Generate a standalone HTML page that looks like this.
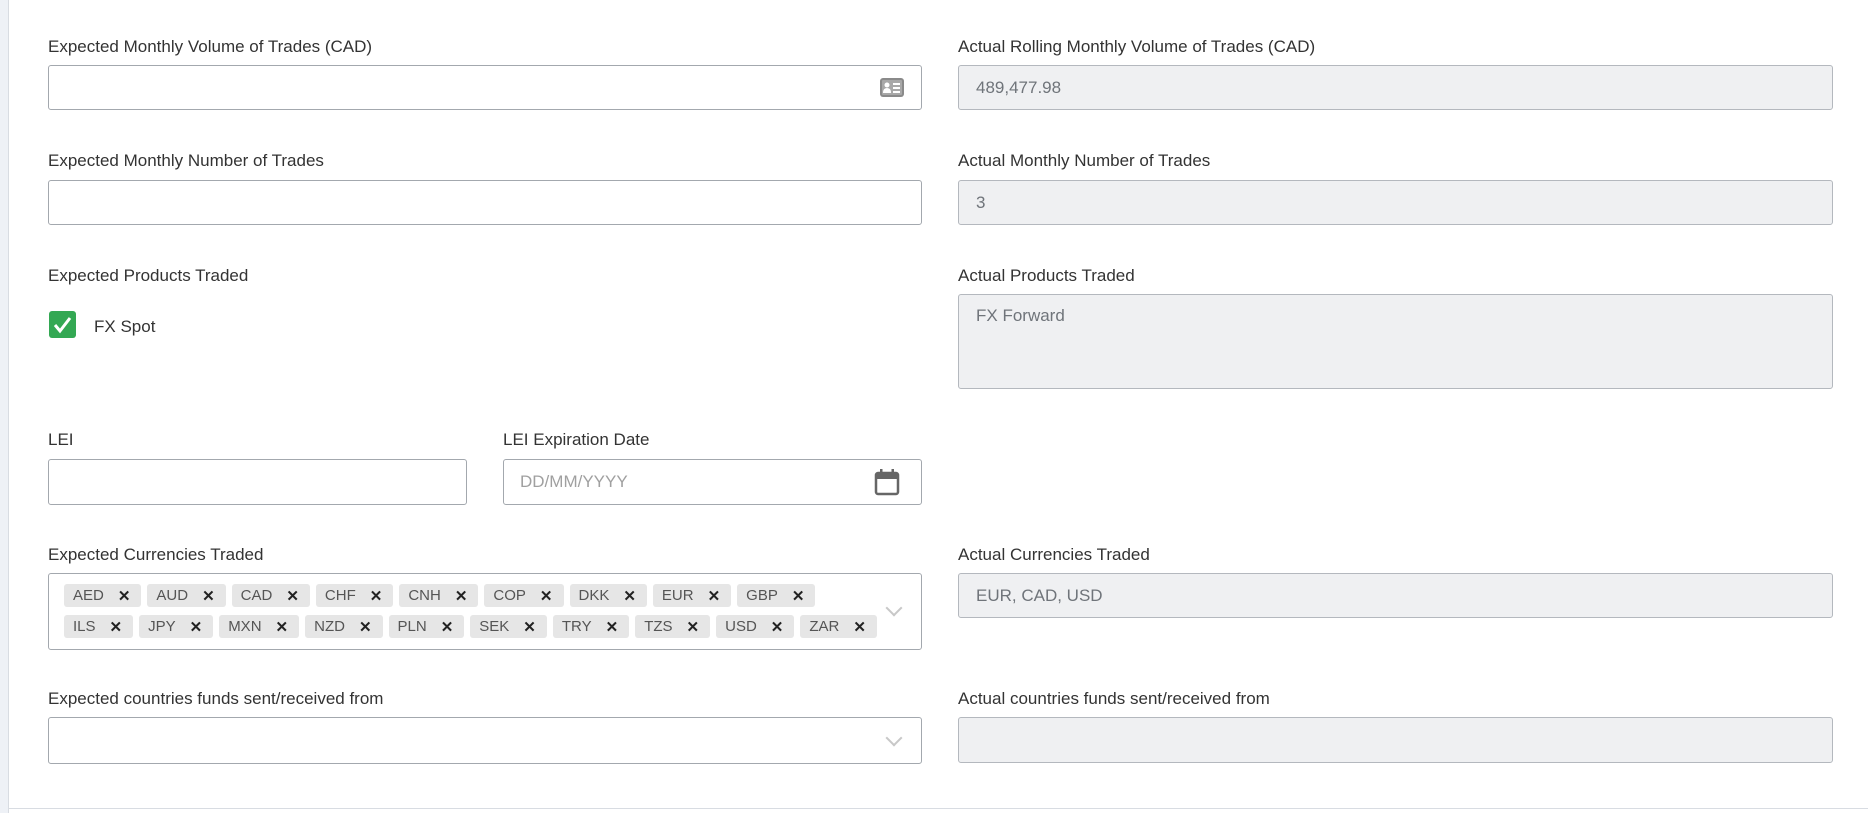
<!DOCTYPE html>
<html><head><meta charset="utf-8"><style>
*{box-sizing:border-box;margin:0;padding:0}
body{width:1868px;height:813px;background:#fff;font-family:"Liberation Sans",sans-serif;color:#333;position:relative;overflow:hidden}
.strip{position:absolute;left:0;top:0;width:9px;height:813px;background:#eef1f6;border-right:1px solid #d8dce2}
.bottom{position:absolute;left:9px;top:808px;width:1859px;height:1px;background:#d8dce2}
.lbl{position:absolute;font-size:17px;color:#333;line-height:20px;margin-top:2px}
.box{position:absolute;border:1px solid #a3a8ae;border-radius:3px;background:#fff}
.dis{background:#eff0f2;border-color:#b4b8be;color:#6f747a;font-size:17px;padding-left:17px}
.chip{display:inline-flex;align-items:center;height:23px;background:#e6e6e6;border-radius:3px;font-size:15px;color:#555;padding:0 11px 0 9px;margin-right:6px}
.chip b{font-size:15px;color:#222;margin-left:14px;font-weight:bold}
.row{position:absolute;left:15px;display:flex}
.chev{position:absolute;width:12px;height:12px;border-right:2px solid #c8c8c8;border-bottom:2px solid #c8c8c8;transform:rotate(45deg)}
</style></head><body>
<div class="strip"></div><div class="bottom"></div>

<div class="lbl" style="left:48px;top:35px">Expected Monthly Volume of Trades (CAD)</div>
<div class="box" style="left:48px;top:65px;width:874px;height:45px">
<svg style="position:absolute;left:831px;top:12px" width="24" height="19" viewBox="0 0 24 19"><rect x="0" y="0" width="24" height="19" rx="3" fill="#8a8a8a"/><rect x="2" y="2" width="20" height="15" rx="1" fill="#a8a8a8"/><circle cx="7" cy="7" r="2.5" fill="#fff"/><path d="M3 15 Q3 10 7 10 Q11 10 11 15Z" fill="#fff"/><rect x="13" y="5" width="7" height="2" fill="#fff"/><rect x="13" y="9" width="7" height="2" fill="#fff"/><rect x="13" y="13" width="7" height="2" fill="#fff"/></svg>
</div>
<div class="lbl" style="left:958px;top:35px">Actual Rolling Monthly Volume of Trades (CAD)</div>
<div class="box dis" style="left:958px;top:65px;width:875px;height:45px;line-height:43px">489,477.98</div>

<div class="lbl" style="left:48px;top:149px">Expected Monthly Number of Trades</div>
<div class="box" style="left:48px;top:180px;width:874px;height:45px"></div>
<div class="lbl" style="left:958px;top:149px">Actual Monthly Number of Trades</div>
<div class="box dis" style="left:958px;top:180px;width:875px;height:45px;line-height:43px">3</div>

<div class="lbl" style="left:48px;top:264px">Expected Products Traded</div>
<div style="position:absolute;left:49px;top:311px;width:27px;height:27px;background:#33a853;border-radius:3px">
<svg width="27" height="27" viewBox="0 0 27 27"><path d="M6 14 L11 20 L21 7" fill="none" stroke="#fff" stroke-width="3"/></svg></div>
<div class="lbl" style="left:94px;top:315px">FX Spot</div>
<div class="lbl" style="left:958px;top:264px">Actual Products Traded</div>
<div class="box dis" style="left:958px;top:294px;width:875px;height:95px;padding-top:11px">FX Forward</div>

<div class="lbl" style="left:48px;top:428px">LEI</div>
<div class="box" style="left:48px;top:459px;width:419px;height:46px"></div>
<div class="lbl" style="left:503px;top:428px">LEI Expiration Date</div>
<div class="box" style="left:503px;top:459px;width:419px;height:46px;line-height:44px;padding-left:16px;font-size:17px;color:#a0a0a0">DD/MM/YYYY
<svg style="position:absolute;left:370px;top:8px" width="26" height="28" viewBox="0 0 26 28"><rect x="2" y="5" width="22" height="21" rx="2" fill="none" stroke="#666" stroke-width="2.5"/><rect x="2" y="5" width="22" height="6" fill="#666"/><rect x="6" y="1" width="2.5" height="6" fill="#666"/><rect x="17.5" y="1" width="2.5" height="6" fill="#666"/></svg></div>

<div class="lbl" style="left:48px;top:543px">Expected Currencies Traded</div>
<div class="box" style="left:48px;top:573px;width:874px;height:77px">
<div class="row" style="top:10px"><span class="chip">AED<b>✕</b></span><span class="chip">AUD<b>✕</b></span><span class="chip">CAD<b>✕</b></span><span class="chip">CHF<b>✕</b></span><span class="chip">CNH<b>✕</b></span><span class="chip">COP<b>✕</b></span><span class="chip">DKK<b>✕</b></span><span class="chip">EUR<b>✕</b></span><span class="chip">GBP<b>✕</b></span></div>
<div class="row" style="top:41px"><span class="chip">ILS<b>✕</b></span><span class="chip">JPY<b>✕</b></span><span class="chip">MXN<b>✕</b></span><span class="chip">NZD<b>✕</b></span><span class="chip">PLN<b>✕</b></span><span class="chip">SEK<b>✕</b></span><span class="chip">TRY<b>✕</b></span><span class="chip">TZS<b>✕</b></span><span class="chip">USD<b>✕</b></span><span class="chip">ZAR<b>✕</b></span></div>
<div class="chev" style="left:839px;top:28px"></div>
</div>
<div class="lbl" style="left:958px;top:543px">Actual Currencies Traded</div>
<div class="box dis" style="left:958px;top:573px;width:875px;height:45px;line-height:43px">EUR, CAD, USD</div>

<div class="lbl" style="left:48px;top:687px">Expected countries funds sent/received from</div>
<div class="box" style="left:48px;top:717px;width:874px;height:47px"><div class="chev" style="left:839px;top:14px"></div></div>
<div class="lbl" style="left:958px;top:687px">Actual countries funds sent/received from</div>
<div class="box dis" style="left:958px;top:717px;width:875px;height:46px"></div>
</body></html>
